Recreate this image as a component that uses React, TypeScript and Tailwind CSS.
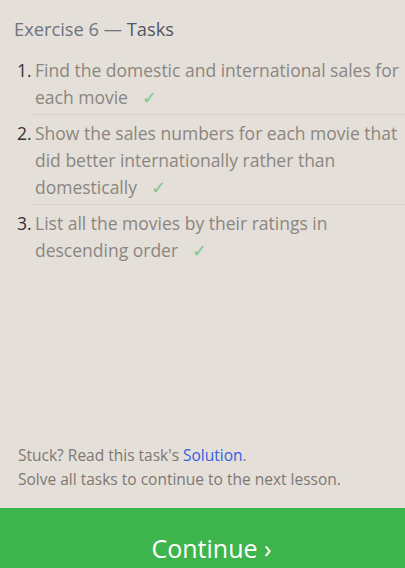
import React from "react";

const tasks = [
  "Find the domestic and international sales for each movie",
  "Show the sales numbers for each movie that did better internationally rather than domestically",
  "List all the movies by their ratings in descending order",
];

export default function App() {
  return (
    <div
      className="w-[405px] h-[568px] bg-[#e4dfd8] flex flex-col overflow-hidden"
      style={{ fontFamily: '"Open Sans", "Noto Sans", sans-serif' }}
    >
      <div className="flex-1 flex flex-col">
        <h1 className="pl-[14px] pt-[16px] text-[18.3px] leading-[26px] text-[#6e7480]">
          Exercise 6 — <span className="text-[#505662]">Tasks</span>
        </h1>
        <ol className="mt-[10px] pl-[30px]">
          {tasks.map((t, i) => (
            <li
              key={i}
              className={`flex pt-[5px] pb-[3px] ${i < tasks.length - 1 ? "border-b border-[#d6d1ca]" : ""}`}
            >
              <span className="ml-[-13px] w-[18px] shrink-0 text-[17.5px] leading-[27px] text-[#333333]">{i + 1}.</span>
              <p className="text-[17.5px] leading-[27px] text-[#8b8681] pr-[4px]">
                {t}
                {"\u00a0\u00a0\u00a0"}
                <span className="text-[#7fc886]">✓</span>
              </p>
            </li>
          ))}
        </ol>
      </div>
      <div className="pl-[18px] pb-[17px] text-[15.5px] leading-[24px] text-[#7e7873]">
        <p>
          Stuck? Read this task's <span className="text-[#3160e0]">Solution</span>.
        </p>
        <p>Solve all tasks to continue to the next lesson.</p>
      </div>
      <div className="h-[60px] shrink-0 bg-[#3db54c] flex items-start justify-center pt-[21px]">
        <span className="text-[25px] leading-[38px] text-white pl-[18px]">Continue ›</span>
      </div>
    </div>
  );
}
